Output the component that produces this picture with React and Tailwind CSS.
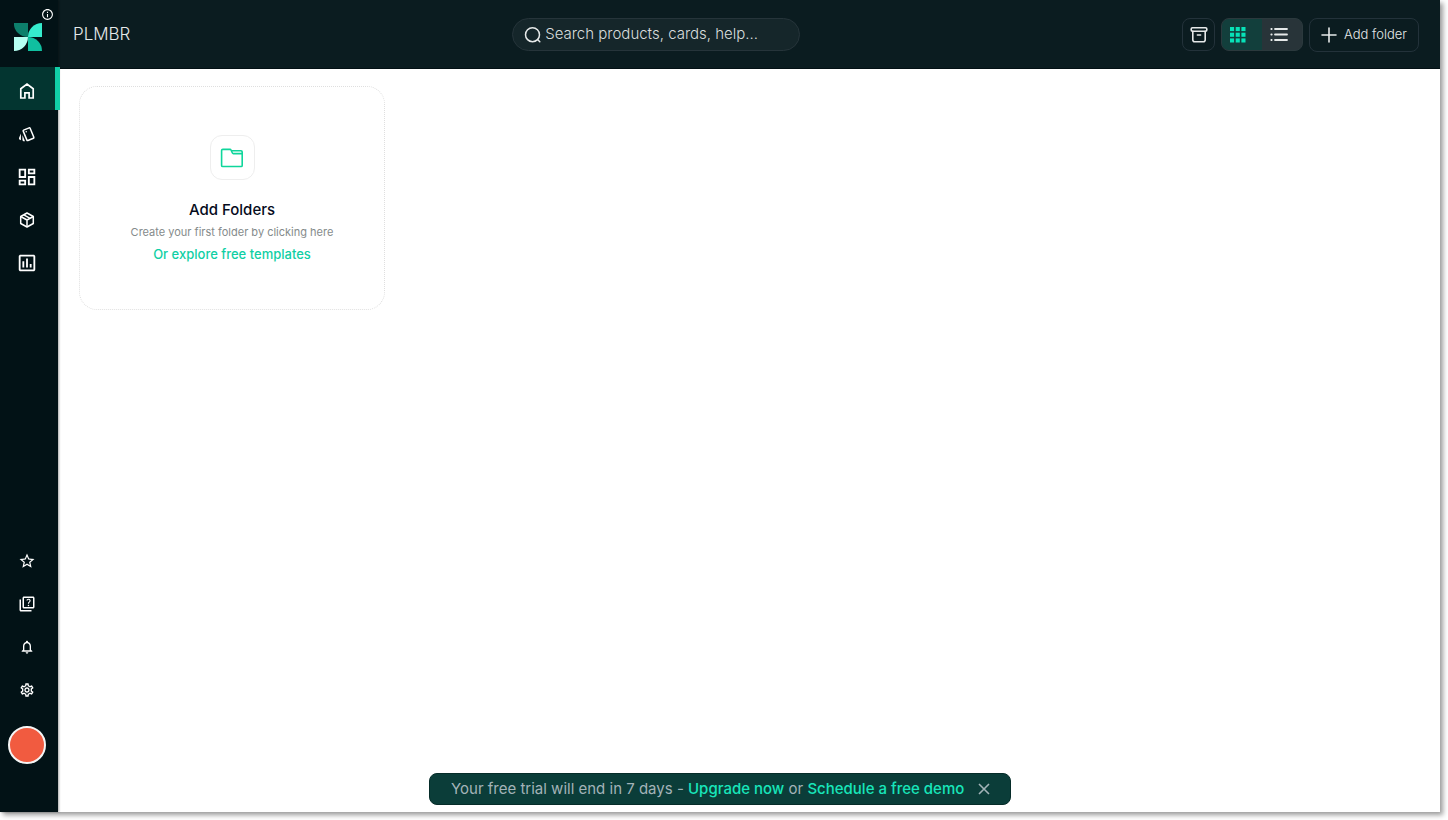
import React, { useState } from 'react'
import {
  MdNotificationsNone,
  MdOutlineDashboard,
  MdOutlineInfo,
  MdOutlineInsertChart,
  MdOutlineQuiz,
  MdOutlineSettings,
  MdOutlineStyle,
  MdStarBorder
} from 'react-icons/md'

const HomeIcon = ({ className }) => (
  <svg viewBox="0 0 18 18" fill="none" stroke="currentColor" strokeWidth="1.7" className={className}>
    <path d="M2.8 16V6.7L9 2l6.2 4.7V16h-4.1v-5.2H6.9V16z" />
  </svg>
)

const BoxIcon = ({ className }) => (
  <svg viewBox="0 0 18 18" fill="none" stroke="currentColor" strokeWidth="1.5" strokeLinejoin="round" className={className}>
    <path d="M9 2l6.3 3.5v7L9 16l-6.3-3.5v-7z" />
    <path d="M2.7 5.5L9 9l6.3-3.5M9 9v7M5.8 3.8l6.3 3.5" />
  </svg>
)

const Logo = () => (
  <svg viewBox="0 0 28 28" className="w-7 h-7" aria-hidden="true">
    <path d="M0 0h14v14A14 13 0 0 1 0 0z" fill="#0d7f6c" />
    <path d="M28 0v14H14A14 14 0 0 1 28 0z" fill="#35eccd" />
    <path d="M0 28V14h14A14 14 0 0 1 0 28z" fill="#b5fff2" />
    <path d="M14 28V14A14 14 0 0 1 28 28z" fill="#10bfa0" />
  </svg>
)

const SearchIcon = () => (
  <svg viewBox="0 0 18 18" fill="none" stroke="currentColor" strokeWidth="1.5" strokeLinecap="round" className="w-[18px] h-[18px] shrink-0">
    <circle cx="8.5" cy="8.7" r="7" />
    <path d="M13.8 13.8l2 2" />
  </svg>
)

const ArchiveIcon = () => (
  <svg viewBox="0 0 18 18" fill="none" stroke="currentColor" strokeWidth="1.6" strokeLinejoin="round" strokeLinecap="round" className="w-[18px] h-[18px]">
    <rect x="1.2" y="1.8" width="15.6" height="3.4" rx="1.2" />
    <path d="M2.8 5.2v8.6a2 2 0 0 0 2 2h8.4a2 2 0 0 0 2-2V5.2M7.4 9h3.2" />
  </svg>
)

const GridIcon = () => (
  <svg viewBox="0 0 16 16" fill="currentColor" className="w-4 h-4">
    {[0, 5.7, 11.4].map((y) =>
      [0, 5.7, 11.4].map((x) => <rect key={`${x}-${y}`} x={x} y={y} width="4.1" height="4.1" />)
    )}
  </svg>
)

const ListIcon = () => (
  <svg viewBox="0 0 18 16" fill="none" stroke="currentColor" strokeWidth="1.8" strokeLinecap="round" className="w-[18px] h-4">
    <path d="M5 2h12M5 7.5h12M5 13h12M1.3 2h.4M1.3 7.5h.4M1.3 13h.4" />
  </svg>
)

const PlusIcon = () => (
  <svg viewBox="0 0 16 16" fill="none" stroke="currentColor" strokeWidth="1.6" strokeLinecap="round" className="w-4 h-4">
    <path d="M8 1v14M1 8h14" />
  </svg>
)

const FolderIcon = () => (
  <svg viewBox="0 0 24 20" fill="none" stroke="currentColor" strokeWidth="1.6" strokeLinejoin="round" className="w-6 h-5">
    <path d="M2.8 1.4h7.2c.5 0 .8.2 1 .6l1.4 3c.2.4.5.6.9.6h8.9v11.8c0 .7-.4 1.1-1.1 1.1H2.8c-.8 0-1.2-.4-1.2-1.1V2.4c0-.6.5-1 1.2-1z" />
    <path d="M11 2.8h10c.8 0 1.2.4 1.2 1.1v2" />
  </svg>
)

const CloseIcon = () => (
  <svg viewBox="0 0 12 12" fill="none" stroke="currentColor" strokeWidth="1.6" className="w-3 h-3">
    <path d="M1 1l10 10M11 1L1 11" />
  </svg>
)

const mainLinks = [
  { label: 'Home', icon: HomeIcon, size: 'w-[18px] h-[18px]', active: true },
  { label: 'Cards', icon: MdOutlineStyle, size: 'w-[18px] h-[18px]' },
  { label: 'Dashboard', icon: MdOutlineDashboard, size: 'w-[22px] h-[22px]' },
  { label: 'Products', icon: BoxIcon, size: 'w-[18px] h-[18px]' },
  { label: 'Reports', icon: MdOutlineInsertChart, size: 'w-[22px] h-[22px]' }
]

const bottomLinks = [
  { label: 'Favorites', icon: MdStarBorder, size: 'w-[18px] h-[18px]' },
  { label: 'Help', icon: MdOutlineQuiz, size: 'w-[18px] h-[18px]' },
  { label: 'Notifications', icon: MdNotificationsNone, size: 'w-4 h-4' },
  { label: 'Settings', icon: MdOutlineSettings, size: 'w-4 h-4' }
]

const NavItem = ({ item }) => {
  const Icon = item.icon
  return (
    <a
      href="#"
      aria-label={item.label}
      className={`flex items-center h-[43px] w-[60px] pt-1 border-r-[5px] ${item.active ? 'bg-[#033530] border-[#11cfa8]' : 'border-transparent'}`}
    >
      <span className="flex justify-center w-[54px]">
        <Icon className={item.size} />
      </span>
    </a>
  )
}

const Sidebar = () => (
  <aside className="relative z-10 flex flex-col w-[58px] shrink-0 bg-[#021216] text-white shadow-[1px_0_2px_rgba(0,0,0,0.35)]">
    <div className="relative h-[67px] shrink-0 pt-[23px] pl-[14px]">
      <Logo />
      <button aria-label="About" className="absolute top-2 left-[41px]">
        <MdOutlineInfo className="w-[13px] h-[13px]" />
      </button>
    </div>
    <nav aria-label="Main">
      {mainLinks.map((item) => <NavItem key={item.label} item={item} />)}
    </nav>
    <nav aria-label="Account" className="mt-auto">
      {bottomLinks.map((item) => <NavItem key={item.label} item={item} />)}
    </nav>
    <button aria-label="Profile" className="w-[38px] h-[38px] ml-2 mt-[17px] mb-12 rounded-full bg-[#f15b40] border-2 border-[#f5f5f5]" />
  </aside>
)

const Header = ({ view, setView }) => (
  <header className="grid grid-cols-[22fr_288px_31fr] items-center h-[69px] shrink-0 pt-px pl-[15px] pr-[21px] bg-[#0b1c20] border-b border-[#031014] text-[#e6e9e9]">
    <h1 className="text-[17px] font-light">PLMBR</h1>
    <label className="flex items-center gap-[3px] h-[33px] px-[11px] rounded-full bg-[#15262a] border border-[#26343a]">
      <SearchIcon />
      <input
        type="search"
        aria-label="Search"
        placeholder="Search products, cards, help..."
        className="min-w-0 flex-1 bg-transparent outline-none text-[15px] font-light placeholder:text-[#d9dddd]"
      />
    </label>
    <div className="flex items-center justify-end gap-[6px]">
      <button aria-label="Archive" className="flex items-center justify-center w-[33px] h-[33px] rounded-lg border border-[#23323a]">
        <ArchiveIcon />
      </button>
      <div className="flex h-[33px] w-[82px] rounded-lg overflow-hidden border border-[#2b393d] bg-[#283439]">
        <button aria-label="Grid view" aria-pressed={view === 'grid'} onClick={() => setView('grid')} className="flex items-center w-10 pl-2 bg-[#123f3c] text-[#07e3b8]">
          <GridIcon />
        </button>
        <button aria-label="List view" aria-pressed={view === 'list'} onClick={() => setView('list')} className="flex items-center flex-1 pl-2">
          <ListIcon />
        </button>
      </div>
      <button className="flex items-center gap-[7px] h-[34px] px-[11px] rounded-lg border border-[#23323a] text-[13px] font-light whitespace-nowrap">
        <PlusIcon />
        Add folder
      </button>
    </div>
  </header>
)

const EmptyCard = () => (
  <section className="flex flex-col items-center w-[306px] h-[224px] pt-12 rounded-[18px] border border-dotted border-[#dfdfdf]">
    <button aria-label="Add folder" className="flex items-center justify-center w-[45px] h-[45px] rounded-xl border border-[#eeeeee] text-[#0fd69b]">
      <FolderIcon />
    </button>
    <h2 className="mt-[18px] text-[15px] leading-6 font-medium text-[#050b1c]">Add Folders</h2>
    <p className="text-[11px] leading-5 text-[#858b8b]">Create your first folder by clicking here</p>
    <a href="#" className="text-[13px] leading-6 font-medium text-[#10cfa4]">Or explore free templates</a>
  </section>
)

const TrialBanner = ({ onClose }) => (
  <div className="flex items-center justify-between w-[582px] h-8 pl-[21px] pr-5 rounded-lg bg-[#0b3d39] border border-[#062c29] text-[#a3b3b8] text-[15px] whitespace-nowrap">
    <p>
      Your free trial will end in 7 days -{' '}
      <a href="#" className="font-medium text-[#18e5ba]">Upgrade now</a> or{' '}
      <a href="#" className="font-medium text-[#18e5ba]">Schedule a free demo</a>
    </p>
    <button aria-label="Dismiss" onClick={onClose}>
      <CloseIcon />
    </button>
  </div>
)

const App = () => {
  const [view, setView] = useState('grid')
  const [showTrial, setShowTrial] = useState(true)

  return (
    <div className="flex h-screen pr-2 pb-2 bg-white font-['Inter',sans-serif]">
      <div className="flex flex-1 min-w-0 shadow-[3px_3px_5px_rgba(0,0,0,0.4)]">
        <Sidebar />
        <div className="flex flex-col flex-1 min-w-0 bg-white">
          <Header view={view} setView={setView} />
          <main className="flex-1 pt-[17px] pl-[21px]">
            <EmptyCard />
          </main>
          {showTrial && (
            <div className="flex justify-center pb-[7px] pr-[58px]">
              <TrialBanner onClose={() => setShowTrial(false)} />
            </div>
          )}
        </div>
      </div>
    </div>
  )
}

export default App
